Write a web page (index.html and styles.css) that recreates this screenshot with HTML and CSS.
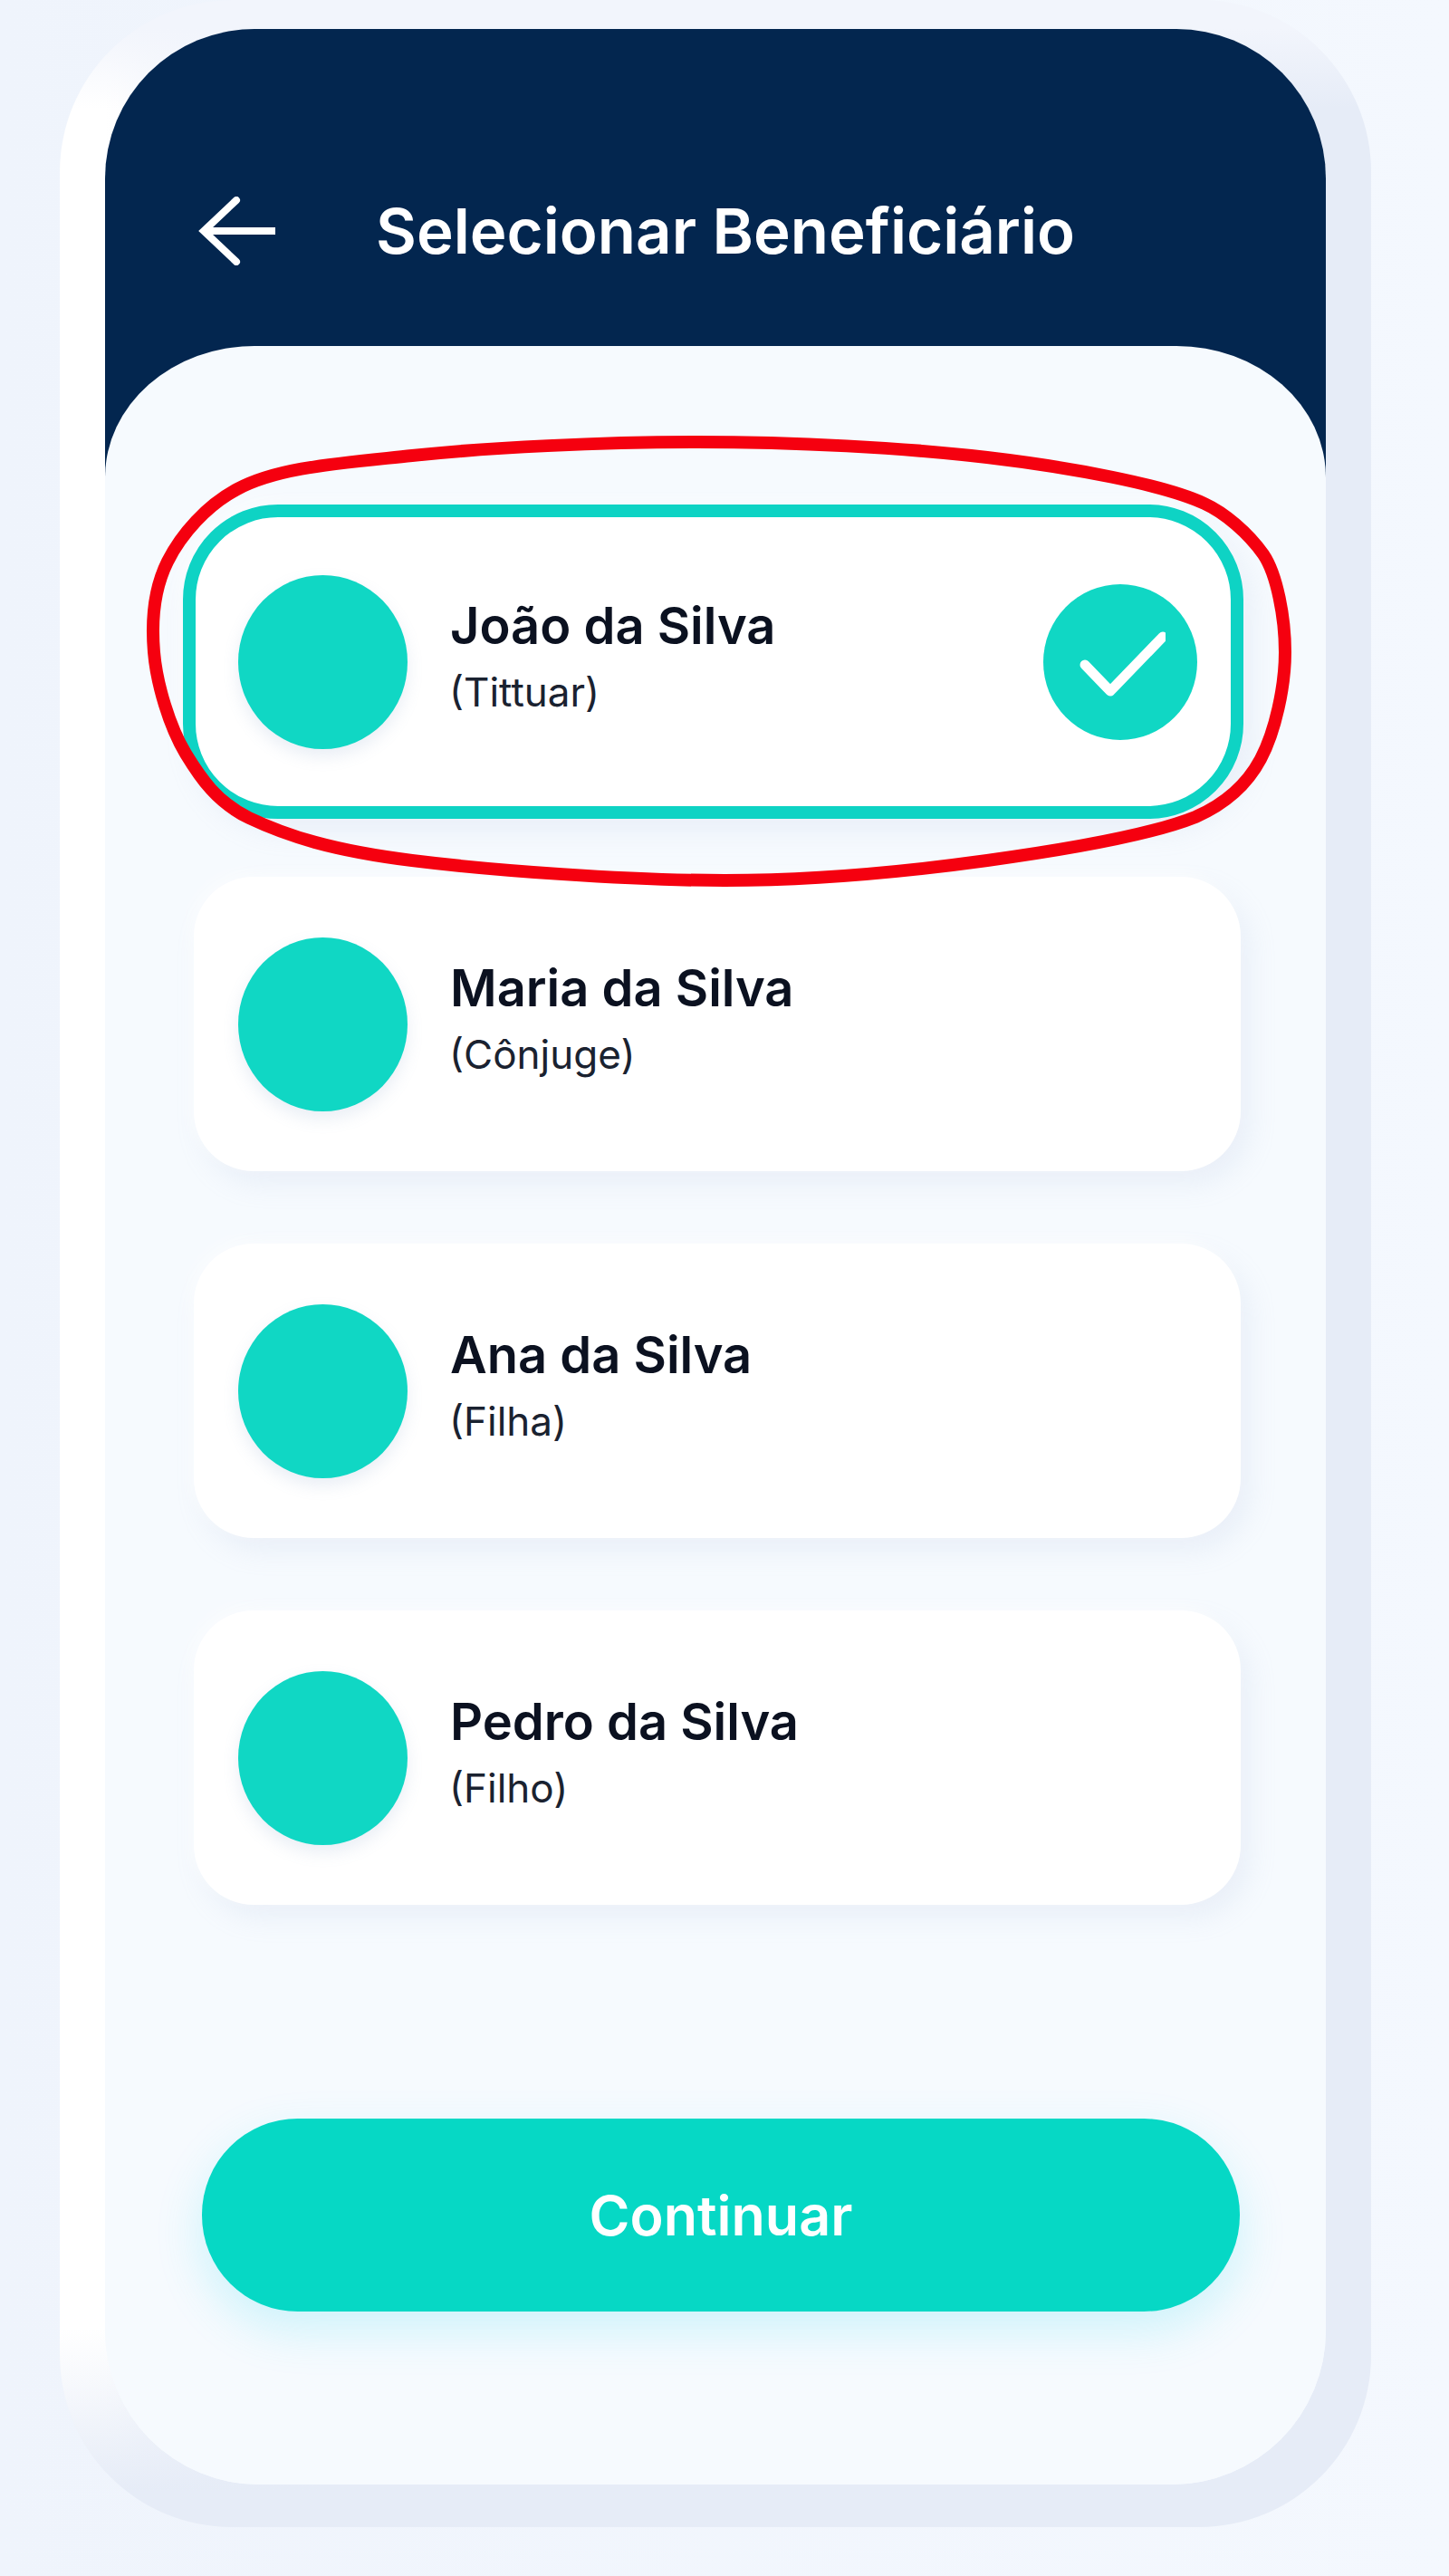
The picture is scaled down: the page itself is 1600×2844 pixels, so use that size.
FILE: index.html
```html
<!DOCTYPE html>
<html lang="pt-BR">
<head>
    <meta charset="UTF-8">
    <meta name="viewport" content="width=device-width, initial-scale=1.0">
    <title>Selecionar Beneficiário</title>
    <link rel="stylesheet" href="styles.css">
</head>
<body>
    <div class="shell">
        <div class="screen">
            <header class="header">
                <svg class="back-icon" width="90" height="76" viewBox="0 0 90 76" fill="none" stroke="#fff" stroke-width="8" stroke-linecap="round" stroke-linejoin="miter">
                    <path d="M43 4 L7 38 L43 72"/>
                    <path d="M7 38 H86" stroke-linecap="butt"/>
                </svg>
                <h1 class="title">Selecionar Beneficiário</h1>
            </header>

            <main class="content">
                <div class="card card-selected">
                    <div class="avatar"></div>
                    <div class="info">
                        <div class="name">João da Silva</div>
                        <div class="relation">(Tittuar)</div>
                    </div>
                    <div class="check">
                        <svg width="100" height="76" viewBox="0 0 100 76" fill="none" stroke="#fff" stroke-width="11" stroke-linecap="round" stroke-linejoin="round">
                            <path d="M11 41 L39 70 L97 10"/>
                        </svg>
                    </div>
                </div>

                <div class="card">
                    <div class="avatar"></div>
                    <div class="info">
                        <div class="name">Maria da Silva</div>
                        <div class="relation">(Cônjuge)</div>
                    </div>
                </div>

                <div class="card">
                    <div class="avatar"></div>
                    <div class="info">
                        <div class="name">Ana da Silva</div>
                        <div class="relation">(Filha)</div>
                    </div>
                </div>

                <div class="card">
                    <div class="avatar"></div>
                    <div class="info">
                        <div class="name">Pedro da Silva</div>
                        <div class="relation">(Filho)</div>
                    </div>
                </div>

                <button class="continue" type="button">Continuar</button>
            </main>
        </div>
    </div>

    <!-- red hand-drawn mark over the first card -->
    <svg class="annotation" width="1600" height="1000" viewBox="0 0 1600 1000" fill="none" stroke="#f5000f" stroke-width="14">
        <path d="M770 488 C876 488 997 494 1090 505 C1183 516 1285 535 1330 556 C1352 566 1378 588 1395 612 C1410 634 1419 682 1419 720 C1419 758 1408 808 1392 838 C1376 868 1352 888 1320 902 C1270 922 1177 938 1090 950 C1003 962 906 972 800 972 C694 972 543 961 455 950 C367 939 317 923 275 903 C240 886 222 860 205 832 C187 802 173 755 170 720 C167 685 170 650 185 620 C200 590 228 558 262 540 C307 516 370 512 455 503 C540 494 664 488 770 488 Z"/>
    </svg>
</body>
</html>
```

FILE: styles.css
```css
* {
    box-sizing: border-box;
}

body {
    margin: 0;
    height: 2844px;
    overflow: hidden;
    position: relative;
    font-family: Inter, "Liberation Sans", sans-serif;
    background: linear-gradient(90deg, #eff4fc 0%, #f4f8fe 100%);
}

.shell {
    width: 1448px;
    height: 2790px;
    margin-left: 66px;
    padding: 32px 50px 48px 50px;
    border-radius: 190px;
    background:
        linear-gradient(180deg, #f2f5fc 0, #f2f5fc 32px, rgba(242, 245, 252, 0) 120px),
        linear-gradient(0deg, #e6ecf7 0, #e6ecf7 40px, rgba(230, 236, 247, 0) 220px),
        linear-gradient(90deg, #fff 0, #fff 50px, rgba(255, 255, 255, 0) 300px),
        #e6ecf7;
}

.screen {
    height: 2711px;
    border-radius: 165px 165px 170px 170px;
    overflow: hidden;
    background: #f6fafe;
}

.header {
    height: 500px;
    padding: 185px 0 0 102px;
    display: flex;
    align-items: flex-start;
    background: #03264f;
}

.back-icon {
    display: block;
}

.title {
    margin: 0 0 0 107px;
    font-size: 69px;
    line-height: 76px;
    font-weight: 600;
    color: #fff;
    white-space: nowrap;
}

.content {
    height: 2361px;
    margin-top: -150px;
    padding-top: 175px;
    display: flex;
    flex-direction: column;
    border-radius: 165px 165px 0 0 / 145px 145px 0 0;
    background: #f6fafe;
}

.card {
    height: 325px;
    margin: 80px 94px 0 98px;
    padding-left: 49px;
    display: flex;
    align-items: center;
    border-radius: 66px;
    background: #fff;
    box-shadow: -6px -6px 16px rgba(255, 255, 255, 0.5), 10px 14px 30px rgba(170, 185, 220, 0.16);
}

.card-selected {
    height: 347px;
    margin: 0 91px -16px 86px;
    padding: 0 37px 0 47px;
    border: 14px solid #0ed3c4;
    border-radius: 105px;
}

.avatar {
    width: 187px;
    height: 192px;
    flex-shrink: 0;
    border-radius: 50%;
    background: #10d7c4;
    box-shadow: 0 8px 18px rgba(120, 150, 190, 0.16);
}

.info {
    margin-left: 47px;
    padding-bottom: 13px;
    flex: 1;
}

.name {
    font-size: 56px;
    line-height: 66px;
    font-weight: 600;
    color: #0b1120;
}

.relation {
    margin-top: 14px;
    margin-left: -1px;
    font-size: 44px;
    line-height: 52px;
    color: #1a2230;
}

.check {
    width: 170px;
    height: 172px;
    flex-shrink: 0;
    display: flex;
    align-items: center;
    justify-content: center;
    border-radius: 50%;
    background: #10d7c4;
}

.continue {
    height: 213px;
    margin: 236px 95px 0 107px;
    border: none;
    border-radius: 106px;
    font-family: inherit;
    font-size: 61px;
    font-weight: 600;
    color: #fff;
    background: #06d8c5;
    box-shadow: 0 20px 50px rgba(60, 225, 240, 0.22);
}

.annotation {
    position: absolute;
    left: 0;
    top: 0;
}
```
